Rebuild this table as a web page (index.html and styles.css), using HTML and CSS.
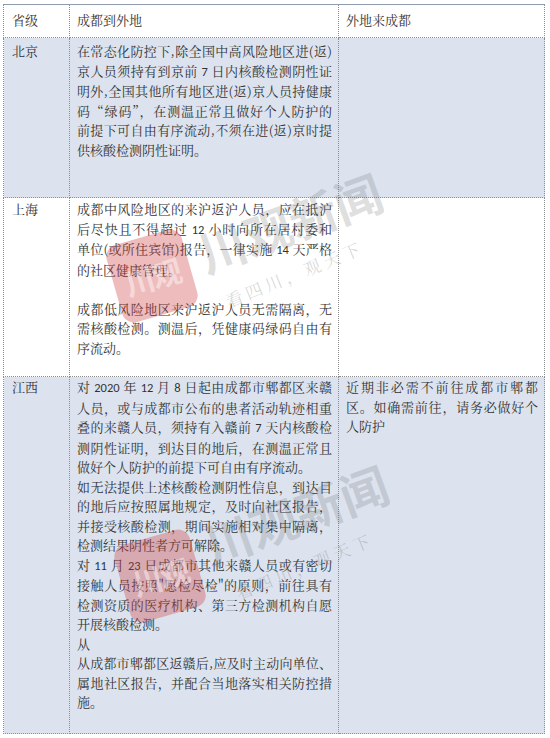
FILE: index.html
```html
<!DOCTYPE html>
<html lang="zh-CN">
<head>
<meta charset="utf-8">
<title>省级防控政策</title>
<link rel="stylesheet" href="styles.css">
</head>
<body>
<div class="page">
  <div class="sheet">
    <table class="grid">
      <colgroup><col class="c1"><col class="c2"><col class="c3"></colgroup>
      <tr class="head">
        <td>省级</td>
        <td>成都到外地</td>
        <td>外地来成都</td>
      </tr>
      <tr class="alt row-bj">
        <td>北京</td>
        <td>
          <span class="ln">在常态化防控下,除全国中高风险地区进(返)</span>
          <span class="ln">京人员须持有到京前 <span class="num">7</span> 日内核酸检测阴性证</span>
          <span class="ln">明外,全国其他所有地区进(返)京人员持健康</span>
          <span class="ln">码“绿码”，在测温正常且做好个人防护的</span>
          <span class="ln">前提下可自由有序流动,不须在进(返)京时提</span>
          <span class="ln end">供核酸检测阴性证明。</span>
        </td>
        <td></td>
      </tr>
      <tr class="row-sh">
        <td>上海</td>
        <td>
          <span class="ln">成都中风险地区的来沪返沪人员，应在抵沪</span>
          <span class="ln">后尽快且不得超过 <span class="num">12</span> 小时向所在居村委和</span>
          <span class="ln">单位(或所住宾馆)报告，一律实施 <span class="num">14</span> 天严格</span>
          <span class="ln end">的社区健康管理。</span>
          <span class="ln end">&nbsp;</span>
          <span class="ln">成都低风险地区来沪返沪人员无需隔离，无</span>
          <span class="ln">需核酸检测。测温后，凭健康码绿码自由有</span>
          <span class="ln end">序流动。</span>
        </td>
        <td></td>
      </tr>
      <tr class="alt row-jx">
        <td>江西</td>
        <td>
          <span class="ln">对 <span class="num">2020</span> 年 <span class="num">12</span> 月 <span class="num">8</span> 日起由成都市郫都区来赣</span>
          <span class="ln">人员，或与成都市公布的患者活动轨迹相重</span>
          <span class="ln">叠的来赣人员，须持有入赣前 <span class="num">7</span> 天内核酸检</span>
          <span class="ln">测阴性证明，到达目的地后，在测温正常且</span>
          <span class="ln end">做好个人防护的前提下可自由有序流动。</span>
          <span class="ln">如无法提供上述核酸检测阴性信息，到达目</span>
          <span class="ln">的地后应按照属地规定，及时向社区报告，</span>
          <span class="ln">并接受核酸检测，期间实施相对集中隔离，</span>
          <span class="ln end">检测结果阴性者方可解除。</span>
          <span class="ln">对 <span class="num">11</span> 月 <span class="num">23</span> 日成都市其他来赣人员或有密切</span>
          <span class="ln">接触人员按照"愿检尽检"的原则，前往具有</span>
          <span class="ln">检测资质的医疗机构、第三方检测机构自愿</span>
          <span class="ln end">开展核酸检测。</span>
          <span class="ln end">从</span>
          <span class="ln">从成都市郫都区返赣后,应及时主动向单位、</span>
          <span class="ln">属地社区报告，并配合当地落实相关防控措</span>
          <span class="ln end">施。</span>
        </td>
        <td>
          <span class="ln">近期非必需不前往成都市郫都</span>
          <span class="ln">区。如确需前往，请务必做好个</span>
          <span class="ln end">人防护</span>
        </td>
      </tr>
    </table>

    <div class="logo logo-a"><span>川观</span></div>
    <div class="wm-name name-a">川观新闻</div>
    <div class="wm-tag tag-a">看四川，观天下</div>

    <div class="logo logo-b"><span>川观</span></div>
    <div class="wm-name name-b">川观新闻</div>
    <div class="wm-tag tag-b">看四川，观天下</div>
  </div>
</div>
</body>
</html>
```

FILE: styles.css
```css
* { box-sizing: border-box; }

body {
  margin: 0;
  background: #ffffff;
  color: #333333;
  font-family: "Noto Serif CJK SC", "Noto Sans CJK SC", serif;
}

.page {
  padding: 4px 0 0 3px;
}

.sheet {
  position: relative;
  width: 541px;
}

.grid {
  width: 541px;
  table-layout: fixed;
  border-collapse: collapse;
  font-size: 13px;
  line-height: 19.5px;
}

.c1 { width: 66px; }
.c2 { width: 269px; }
.c3 { width: 206px; }

.grid td {
  border: 1px dotted #8d8d8d;
  vertical-align: top;
  padding: 1px 6px 0 7px;
  background: #ffffff;
}

.grid td:first-child {
  padding-left: 8px;
}

.head td {
  height: 33px;
  padding-top: 5px;
  border-top: 1px solid #8f9cae;
}

.alt td {
  background: #dce3ef;
}

.row-bj td { height: 160px; padding-top: 3px; }
.row-sh td { height: 179px; padding-top: 1px; }
.row-jx td { height: 357px; padding-top: 0; }

.ln {
  display: block;
  white-space: nowrap;
  text-align: justify;
  text-align-last: justify;
}

.ln.end {
  text-align-last: auto;
}

.num {
  font-family: "Carlito", "Open Sans", "Liberation Sans", sans-serif;
  font-size: 12.5px;
}

/* watermark */
.logo {
  position: absolute;
  width: 78px;
  height: 80px;
  border-radius: 12px;
  background: rgba(206, 60, 60, 0.34);
  transform: rotate(-16deg);
  display: flex;
  align-items: center;
  justify-content: center;
  pointer-events: none;
}

.logo span {
  font-family: "Noto Sans CJK SC", sans-serif;
  font-weight: 700;
  font-size: 30px;
  color: rgba(255, 255, 255, 0.45);
  letter-spacing: -2px;
}

.wm-name {
  position: absolute;
  width: 210px;
  font-family: "Noto Sans CJK SC", sans-serif;
  font-weight: 700;
  font-size: 48px;
  line-height: 52px;
  color: rgba(110, 110, 110, 0.22);
  transform: rotate(-20deg);
  white-space: nowrap;
  pointer-events: none;
}

.wm-tag {
  position: absolute;
  font-family: "Noto Serif CJK SC", "Noto Sans CJK SC", serif;
  font-size: 17px;
  line-height: 20px;
  letter-spacing: 4px;
  color: rgba(110, 110, 110, 0.28);
  transform: rotate(-22deg);
  white-space: nowrap;
  pointer-events: none;
}

.logo-a { left: 110px; top: 232px; }
.name-a { left: 190px; top: 188px; }
.tag-a { left: 218px; top: 260px; }

.logo-b { left: 118px; top: 532px; }
.name-b { left: 196px; top: 480px; }
.tag-b { left: 228px; top: 552px; }
```
